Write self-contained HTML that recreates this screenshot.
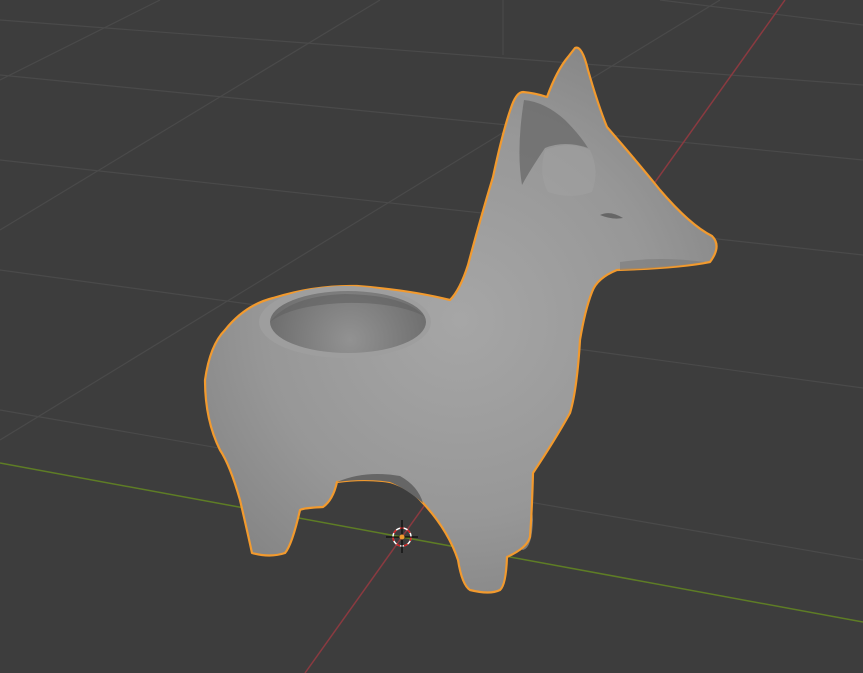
<!DOCTYPE html>
<html><head><meta charset="utf-8"><style>
html,body{margin:0;padding:0;background:#3d3d3d;overflow:hidden}
svg{display:block}
</style></head><body>
<svg width="863" height="673" viewBox="0 0 863 673" xmlns="http://www.w3.org/2000/svg">
<defs>
<radialGradient id="body" cx="460" cy="320" r="330" gradientUnits="userSpaceOnUse">
<stop offset="0" stop-color="#a6a6a6"/><stop offset="0.6" stop-color="#979797"/><stop offset="1" stop-color="#828282"/>
</radialGradient>
<radialGradient id="bowl" cx="350" cy="340" r="90" gradientUnits="userSpaceOnUse">
<stop offset="0" stop-color="#929292"/><stop offset="1" stop-color="#6a6a6a"/>
</radialGradient>
</defs>
<rect width="863" height="673" fill="#3d3d3d"/>
<g stroke="#4a4a4a" stroke-width="1.2" fill="none">
<line x1="0" y1="75" x2="863" y2="160"/>
<line x1="0" y1="20" x2="863" y2="85"/>
<line x1="0" y1="160" x2="863" y2="255"/>
<line x1="0" y1="270" x2="863" y2="388"/>
<line x1="0" y1="410" x2="863" y2="560"/>
<line x1="503" y1="0" x2="503" y2="55"/>
<line x1="0" y1="80" x2="160" y2="0"/>
<line x1="0" y1="230" x2="380" y2="0"/>
<line x1="0" y1="440" x2="720" y2="0"/>
<line x1="660" y1="0" x2="863" y2="25"/>
</g>
<line x1="0" y1="463" x2="863" y2="622" stroke="#5e7d25" stroke-width="1.5"/>
<line x1="785" y1="0" x2="305" y2="673" stroke="#8a3a40" stroke-width="1.5"/>
<path d="M300 510 Q305 490 318 485 L335 485 Q330 505 323 507 Z" fill="#777"/>
<path d="M510 460 Q530 470 533 520 Q532 548 523 550 Q512 548 508 520 Z" fill="#7a7a7a"/>
<path d="M575 48 Q582 45 588 70 Q598 105 607 127 Q640 165 660 190 Q690 225 712 236 Q722 246 710 262 Q680 268 617 270 Q597 278 592 292 Q585 310 580 340 Q577 390 570 413 Q555 440 533 473 Q532 510 530 537 Q527 548 507 557 Q506 585 500 590 Q490 595 470 590 Q462 585 458 560 Q448 530 423 503 Q410 488 390 482 Q365 478 337 482 Q333 500 323 507 Q303 508 300 510 Q292 545 285 553 Q270 558 252 553 Q247 530 240 500 Q230 465 220 450 Q205 420 205 380 Q210 345 225 330 Q245 305 273 298 Q315 285 357 286 Q410 290 450 300 Q460 290 468 265 Q480 220 493 177 Q503 130 512 105 Q517 92 523 92 Q535 93 547 97 Q557 70 568 57 Z"
 fill="url(#body)" stroke="#f29a2e" stroke-width="2.2" stroke-linejoin="round"/>
<path d="M524 100 Q545 102 565 120 Q580 135 588 148 Q565 140 545 148 Q530 170 522 185 Q516 150 524 100 Z" fill="#6c6c6c" opacity="0.8"/>
<path d="M545 150 Q570 140 590 150 Q600 170 592 192 Q570 200 548 192 Q538 175 545 150 Z" fill="#a2a2a2" opacity="0.5"/>
<path d="M600 215 Q610 210 623 218 Q612 220 600 215 Z" fill="#666"/>
<path d="M620 262 Q660 256 705 262 Q670 268 620 270 Z" fill="#7a7a7a" opacity="0.6"/>
<ellipse cx="345" cy="322" rx="86" ry="36" fill="#9e9e9e"/>
<ellipse cx="348" cy="322" rx="78" ry="31" fill="url(#bowl)"/>
<path d="M270 322 Q290 296 345 294 Q405 295 424 316 Q395 302 345 303 Q292 305 270 322 Z" fill="#606060" opacity="0.6"/>
<path d="M337 482 Q365 470 400 476 Q418 486 423 503 Q405 488 390 482 Q365 478 337 482 Z" fill="#666"/>
<g>
<circle cx="402" cy="537" r="9" fill="none" stroke="#fff" stroke-width="1.5"/>
<circle cx="402" cy="537" r="9" fill="none" stroke="#d42020" stroke-width="1.5" stroke-dasharray="4 4"/>
<line x1="402" y1="520" x2="402" y2="553" stroke="#000" stroke-width="1"/>
<line x1="386" y1="537" x2="418" y2="537" stroke="#000" stroke-width="1"/>
<circle cx="402" cy="537" r="2.5" fill="#f29a2e"/>
</g>
</svg>
</body></html>
